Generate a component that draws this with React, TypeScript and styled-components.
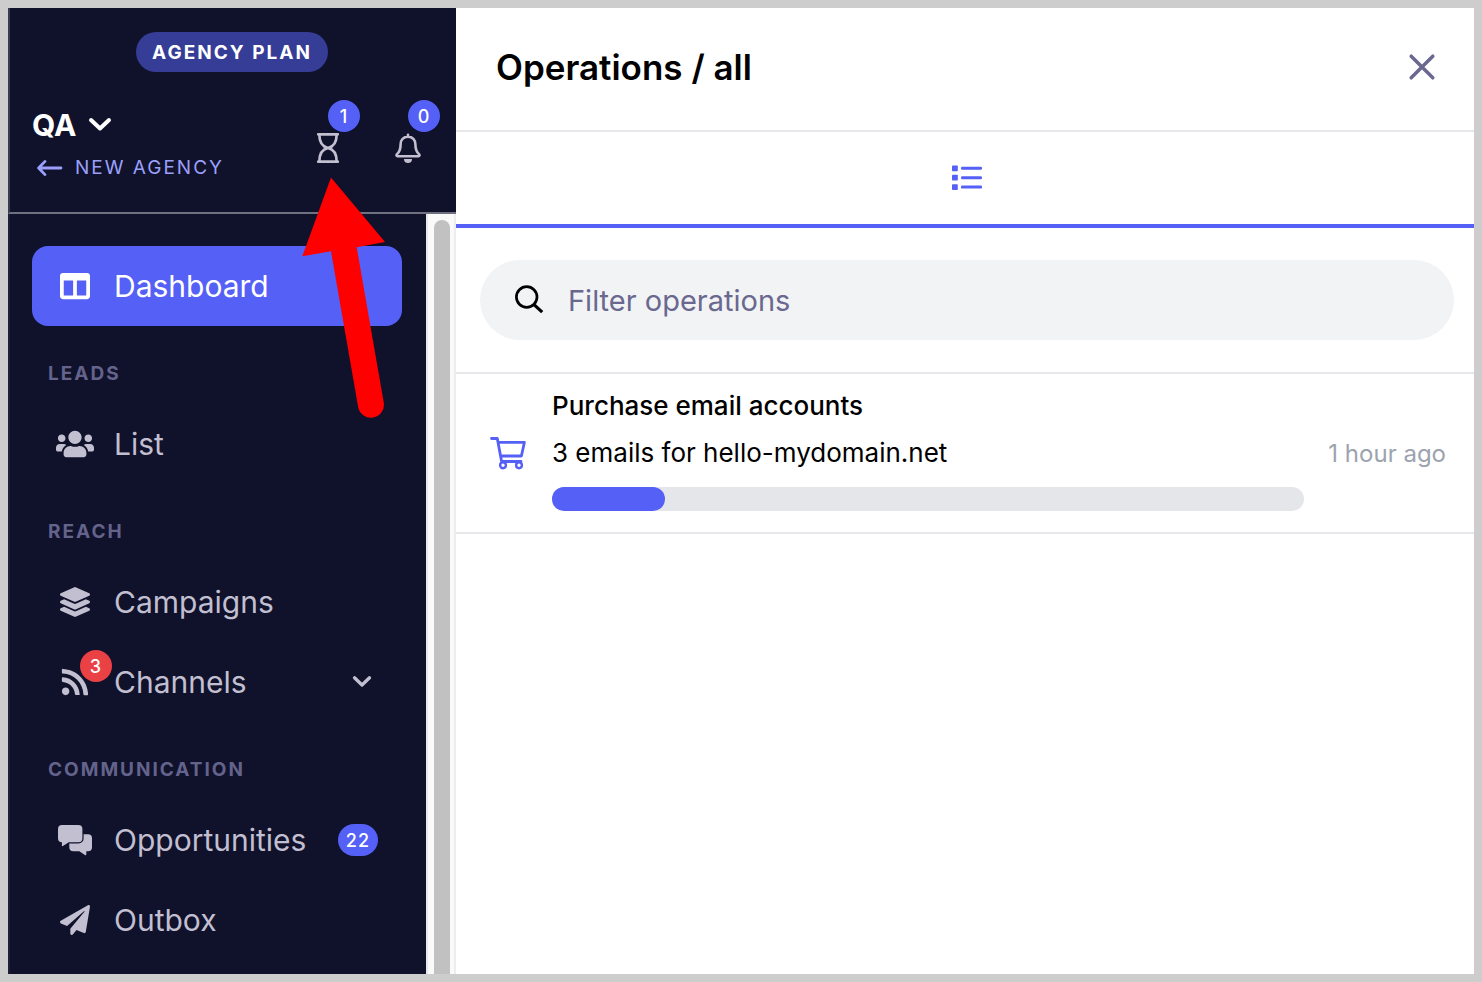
import React from "react";
import styled, { createGlobalStyle } from "styled-components";
import { FaColumns, FaUsers, FaLayerGroup, FaRss, FaPaperPlane } from "react-icons/fa";

const GlobalStyle = createGlobalStyle`
  *, *::before, *::after { box-sizing: border-box; }
  body { margin: 0; background: #cdcdcd; font-family: Inter, "Liberation Sans", sans-serif; }
  button, input { font: inherit; color: inherit; }
  button { padding: 0; border: 0; background: none; cursor: pointer; }
  a { color: inherit; text-decoration: none; }
  h1, h2, h3, p, ul { margin: 0; padding: 0; font-weight: inherit; }
  ul { list-style: none; }
  svg { display: block; flex-shrink: 0; }
`;

const Frame = styled.div`
  display: flex;
  min-height: 100vh;
  padding: 8px;
`;

const Sidebar = styled.aside`
  position: relative;
  display: flex;
  flex-direction: column;
  flex: 0 0 448px;
  background: #10112b;
  color: #c1bfd0;
`;

const SidebarHeader = styled.header`
  display: flex;
  flex-direction: column;
  gap: 28px;
  padding: 24px 16px 28px 22px;
  border-left: 2px solid #3a3b50;
  border-bottom: 2px solid #6f7080;
`;

const PlanBadge = styled.span`
  align-self: center;
  margin-right: 8px;
  padding: 1px 16px 0;
  border-radius: 20px;
  background: #353d97;
  color: #fff;
  font-size: 19px;
  font-weight: 700;
  line-height: 39px;
  letter-spacing: 2px;
`;

const HeaderRow = styled.div`
  display: flex;
  justify-content: space-between;
`;

const Account = styled.div`
  display: flex;
  flex-direction: column;
  align-items: flex-start;
  gap: 8px;
  padding-top: 7px;
`;

const AccountButton = styled.button`
  display: flex;
  align-items: center;
  gap: 12px;
  color: #fff;
  font-size: 30px;
  font-weight: 700;
  line-height: 36px;
`;

const AgencyLink = styled.a`
  display: flex;
  align-items: center;
  gap: 12px;
  padding-left: 5px;
  color: #9aa0fa;
  font-size: 19px;
  line-height: 33px;
  letter-spacing: 2px;
`;

const HeaderActions = styled.div`
  display: flex;
  gap: 32px;
`;

const ActionButton = styled.button`
  position: relative;
  display: flex;
  align-items: flex-end;
  width: 48px;
  height: 64px;
`;

const Badge = styled.span<{ $tone?: "alert"; $floating?: boolean }>`
  display: flex;
  align-items: center;
  justify-content: center;
  min-width: 32px;
  height: 32px;
  padding: 0 8px;
  border-radius: 16px;
  background: ${(p) => (p.$tone === "alert" ? "#e94144" : "#5560f6")};
  color: #fff;
  font-size: 18px;
  font-weight: 500;
  letter-spacing: 1px;
  ${(p) => p.$floating && "position: absolute; top: 0; right: 0;"}
`;

const SidebarBody = styled.div`
  display: flex;
  flex: 1;
`;

const Nav = styled.nav`
  flex: 1;
  padding: 32px 24px 14px 22px;
  border-left: 2px solid #1f2038;
`;

const SectionTitle = styled.h2`
  padding: 33px 16px 15px;
  color: #64638b;
  font-size: 19px;
  font-weight: 700;
  line-height: 30px;
  letter-spacing: 2px;
`;

const NavLink = styled.a<{ $active?: boolean }>`
  display: flex;
  align-items: center;
  height: 80px;
  padding: 0 24px;
  border-radius: 16px;
  background: ${(p) => (p.$active ? "#5560f6" : "transparent")};
  color: ${(p) => (p.$active ? "#fff" : "inherit")};
  font-size: 30px;
`;

const NavIcon = styled.span`
  position: relative;
  display: flex;
  align-items: center;
  justify-content: center;
  width: 38px;
  height: 72px;
  margin-right: 20px;
`;

const NavBadge = styled.span`
  position: absolute;
  top: 4px;
  left: 24px;
`;

const NavLabel = styled.span`
  flex: 1;
`;

const NavToggle = styled.span`
  padding-right: 6px;
`;

const ScrollTrack = styled.div`
  width: 30px;
  padding: 6px 4px 0 6px;
  border-left: 2px solid #e8e8e8;
  border-right: 2px solid #ededed;
  background: #fafafa;
  display: flex;
`;

const ScrollThumb = styled.div`
  width: 16px;
  border-radius: 8px 8px 0 0;
  background: #c1c1c1;
`;

const Pointer = styled.svg`
  position: absolute;
  top: 168px;
  left: 292px;
  pointer-events: none;
`;

const Panel = styled.main`
  flex: 1;
  min-width: 0;
  background: #fff;
  color: #000;
`;

const PanelHeader = styled.header`
  display: flex;
  align-items: center;
  justify-content: space-between;
  height: 124px;
  padding: 0 38px 4px 40px;
  border-bottom: 2px solid #e5e7eb;
`;

const PanelTitle = styled.h1`
  font-size: 35px;
  font-weight: 600;
  line-height: 44px;
`;

const CloseButton = styled.button`
  color: #6a688f;
`;

const Tab = styled.button`
  display: flex;
  align-items: center;
  justify-content: center;
  width: 100%;
  height: 96px;
  padding-left: 4px;
  border-bottom: 4px solid #5560f6;
  color: #5560f6;
`;

const SearchArea = styled.div`
  padding: 32px 20px 32px 24px;
  border-bottom: 2px solid #e5e7eb;
`;

const SearchBox = styled.label`
  display: flex;
  align-items: center;
  gap: 24px;
  height: 80px;
  padding: 0 34px;
  border-radius: 40px;
  background: #f2f3f5;
`;

const SearchInput = styled.input`
  flex: 1;
  min-width: 0;
  padding: 2px 0 0;
  border: 0;
  outline: 0;
  background: transparent;
  font-size: 29px;
  line-height: 40px;
  &::placeholder { color: #6a688f; opacity: 1; }
`;

const Operation = styled.li`
  display: flex;
  align-items: center;
  padding: 8px 28px 21px 34px;
  border-bottom: 2px solid #e5e7eb;
`;

const OperationIcon = styled.span`
  padding-top: 13px;
  margin-right: 26px;
  color: #5560f6;
`;

const OperationBody = styled.div`
  flex: 1;
  min-width: 0;
  font-size: 26px;
  line-height: 47px;
`;

const OperationTitle = styled.h3`
  font-size: 26px;
  font-weight: 500;
`;

const ProgressTrack = styled.div`
  height: 24px;
  margin-top: 11px;
  border-radius: 12px;
  background: #e5e6ea;
`;

const ProgressBar = styled.div`
  height: 100%;
  border-radius: 12px;
  background: #5560f6;
`;

const OperationTime = styled.time`
  padding-top: 14px;
  margin-left: 24px;
  color: #9ca3af;
  font-size: 24px;
  white-space: nowrap;
`;

const Chevron = ({ width, stroke }: { width: number; stroke: number }) => (
  <svg width={width} height={width} viewBox="0 0 24 24" fill="none" stroke="currentColor" strokeWidth={stroke} strokeLinecap="round" strokeLinejoin="round">
    <path d="M3 7 12 15.500 21 7" />
  </svg>
);

const ArrowLeft = () => (
  <svg width="26" height="18" viewBox="0 0 26 18" fill="none" stroke="currentColor" strokeWidth="2.8" strokeLinecap="round" strokeLinejoin="round">
    <path d="M8 2.400 1.600 9 8 15.600M2 9h22" />
  </svg>
);

const Hourglass = () => (
  <svg width="32" height="32" viewBox="0 0 32 32" fill="none" stroke="currentColor" strokeWidth="2.7" strokeLinecap="round" strokeLinejoin="round">
    <path d="M6.200 2.300h19.600M6.200 29.700h19.600M7.300 2.300c0 7.800 3.600 12.600 8.700 13.700 5.100-1.100 8.700-5.900 8.700-13.700M7.300 29.700c0-7.800 3.600-12.600 8.700-13.700 5.100 1.100 8.700 5.900 8.700 13.700" />
  </svg>
);

const Bell = () => (
  <svg width="32" height="32" viewBox="0 0 32 32" fill="none" stroke="currentColor" strokeWidth="2.6" strokeLinecap="round" strokeLinejoin="round">
    <path d="M16 4.600c-4.600 0-7.400 3.400-7.400 7.800 0 5.400-1.600 7.800-3.600 9.800-.9.900-.7 2 .6 2h20.800c1.300 0 1.500-1.100.6-2-2-2-3.600-4.400-3.600-9.800 0-4.400-2.800-7.800-7.400-7.800zM16 2.700v1.800" />
    <path stroke="none" fill="currentColor" d="M12 27h8a4 4 0 0 1-8 0z" />
  </svg>
);

const Comments = () => (
  <svg width="34" height="31" viewBox="0 0 34 31" fill="currentColor">
    <path d="M4 0h16.400a4 4 0 0 1 4 4v9.300a4 4 0 0 1-4 4h-9.600l-5.900 3.800a.7.700 0 0 1-1-.6v-3.200A4 4 0 0 1 0 13.300V4a4 4 0 0 1 4-4z" />
    <path d="M25.600 9.300H30a4 4 0 0 1 4 4v9a4 4 0 0 1-4 4h-1.700v3.300a.7.700 0 0 1-1 .6l-6-3.900H15.300a4 4 0 0 1-4-4v-3.800h9.300a5 5 0 0 0 5-5z" />
  </svg>
);

const Close = () => (
  <svg width="28" height="28" viewBox="0 0 28 28" fill="none" stroke="currentColor" strokeWidth="3.500" strokeLinecap="round">
    <path d="M3.200 3.200 24.800 24.800M24.800 3.200 3.200 24.800" />
  </svg>
);

const ListIcon = () => (
  <svg width="30" height="26" viewBox="0 0 30 26" fill="currentColor">
    {[0.400, 9.800, 19.200].map((y) => (
      <g key={y}>
        <rect x="0" y={y} width="5.800" height="5.800" rx=".8" />
        <rect x="9" y={y + 1.400} width="21" height="3" rx="1.200" />
      </g>
    ))}
  </svg>
);

const Search = () => (
  <svg width="30" height="30" viewBox="0 0 30 30" fill="none" stroke="currentColor" strokeWidth="2.700">
    <circle cx="12.700" cy="12" r="10.300" />
    <path d="m20 19.600 8.200 7.600" strokeWidth="3.200" />
  </svg>
);

const Cart = () => (
  <svg width="36" height="34" viewBox="0 0 36 34" fill="none" stroke="currentColor" strokeWidth="2.800" strokeLinecap="round" strokeLinejoin="round">
    <path d="M1.500 2.500h5.800L11.600 25.500H31M8.200 6.300h26.200l-3 13.700H10.600" />
    <circle cx="13" cy="29.300" r="2.900" strokeWidth="2.400" />
    <circle cx="29" cy="29.300" r="2.900" strokeWidth="2.400" />
  </svg>
);

export default function App() {
  const progress = 15;
  return (
    <>
      <GlobalStyle />
      <Frame>
        <Sidebar>
          <SidebarHeader>
            <PlanBadge>AGENCY PLAN</PlanBadge>
            <HeaderRow>
              <Account>
                <AccountButton type="button">
                  QA
                  <Chevron width={24} stroke={4} />
                </AccountButton>
                <AgencyLink href="#agency">
                  <ArrowLeft />
                  NEW AGENCY
                </AgencyLink>
              </Account>
              <HeaderActions>
                <ActionButton type="button" aria-label="Operations">
                  <Hourglass />
                  <Badge $floating>1</Badge>
                </ActionButton>
                <ActionButton type="button" aria-label="Notifications">
                  <Bell />
                  <Badge $floating>0</Badge>
                </ActionButton>
              </HeaderActions>
            </HeaderRow>
          </SidebarHeader>
          <SidebarBody>
            <Nav>
              <NavLink href="#dashboard" $active>
                <NavIcon><FaColumns size={30} /></NavIcon>
                <NavLabel>Dashboard</NavLabel>
              </NavLink>
              <SectionTitle>LEADS</SectionTitle>
              <NavLink href="#list">
                <NavIcon><FaUsers size={38} /></NavIcon>
                <NavLabel>List</NavLabel>
              </NavLink>
              <SectionTitle>REACH</SectionTitle>
              <NavLink href="#campaigns">
                <NavIcon><FaLayerGroup size={30} /></NavIcon>
                <NavLabel>Campaigns</NavLabel>
              </NavLink>
              <NavLink href="#channels">
                <NavIcon>
                  <FaRss size={30} />
                  <NavBadge><Badge $tone="alert">3</Badge></NavBadge>
                </NavIcon>
                <NavLabel>Channels</NavLabel>
                <NavToggle><Chevron width={20} stroke={4} /></NavToggle>
              </NavLink>
              <SectionTitle>COMMUNICATION</SectionTitle>
              <NavLink href="#opportunities">
                <NavIcon><Comments /></NavIcon>
                <NavLabel>Opportunities</NavLabel>
                <Badge>22</Badge>
              </NavLink>
              <NavLink href="#outbox">
                <NavIcon><FaPaperPlane size={30} /></NavIcon>
                <NavLabel>Outbox</NavLabel>
              </NavLink>
            </Nav>
            <ScrollTrack>
              <ScrollThumb />
            </ScrollTrack>
          </SidebarBody>
          <Pointer width="88" height="244" viewBox="300 176 88 244" fill="#fe0000" aria-hidden="true">
            <path d="M331 177.500 385 242 356.700 247.300 383.800 402.800A13 13 0 0 1 358.200 407.300L331 251.300 302.300 256.300Z" />
          </Pointer>
        </Sidebar>
        <Panel>
          <PanelHeader>
            <PanelTitle>Operations / all</PanelTitle>
            <CloseButton type="button" aria-label="Close"><Close /></CloseButton>
          </PanelHeader>
          <Tab type="button" aria-label="All operations"><ListIcon /></Tab>
          <SearchArea>
            <SearchBox>
              <Search />
              <SearchInput type="text" placeholder="Filter operations" aria-label="Filter operations" />
            </SearchBox>
          </SearchArea>
          <ul>
            <Operation>
              <OperationIcon><Cart /></OperationIcon>
              <OperationBody>
                <OperationTitle>Purchase email accounts</OperationTitle>
                <p>3 emails for hello-mydomain.net</p>
                <ProgressTrack role="progressbar" aria-valuenow={progress} aria-label="Purchase progress">
                  <ProgressBar style={{ width: `${progress}%` }} />
                </ProgressTrack>
              </OperationBody>
              <OperationTime>1 hour ago</OperationTime>
            </Operation>
          </ul>
        </Panel>
      </Frame>
    </>
  );
}
